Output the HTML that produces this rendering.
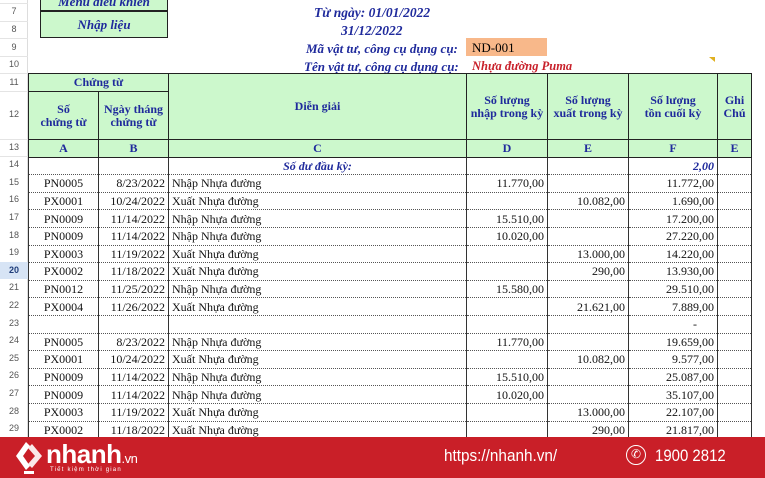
<!DOCTYPE html>
<html><head><meta charset="utf-8"><style>
*{margin:0;padding:0;box-sizing:border-box}
body{width:765px;height:478px;overflow:hidden;background:#fff;position:relative;font-family:"Liberation Serif",serif;}
.rn{position:absolute;left:0;width:28px;text-align:center;font:9px "Liberation Sans",sans-serif;color:#555;}
.abs{position:absolute;white-space:nowrap}
.bi{font-weight:bold;font-style:italic;color:#1f2a9c;font-size:13px}
table{position:absolute;left:28px;top:73px;border-collapse:collapse;table-layout:fixed;font-size:12px}
td{overflow:hidden;white-space:nowrap;padding:0 3px;height:17.6px;line-height:16px}
.h td{background:#ccf8cc;border:1px solid #222;color:#1f2a9c;font-weight:bold;text-align:center;line-height:13px}
.d td{border-left:1px solid #333;border-right:1px solid #333;border-bottom:1px dotted #555;color:#111}
.c{text-align:center}.r{text-align:right}
</style></head><body>
<div class="rn" style="top:6px">7</div>
<div class="rn" style="top:24px">8</div>
<div class="rn" style="top:42px">9</div>
<div class="rn" style="top:59px">10</div>
<div class="rn" style="top:77px">11</div>
<div class="rn" style="top:109px">12</div>
<div class="rn" style="top:142px">13</div>
<div style="position:absolute;left:0;top:0;width:28px;height:437px;border-right:1px solid #ddd"></div>
<div style="position:absolute;left:0;top:3px;width:28px;height:1px;background:#e4e4e4;box-shadow:0 18px #e4e4e4,0 35px #e4e4e4,0 53px #e4e4e4,0 70px #e4e4e4,0 88px #e4e4e4,0 136px #e4e4e4,0 153px #e4e4e4"></div>
<div class="abs" style="left:40px;top:-8px;width:128px;height:19px;background:#ccf8cc;border:1.5px solid #222;text-align:center" ><span class="bi">Menu điều khiển</span></div>
<div class="abs" style="left:40px;top:11px;width:128px;height:27px;background:#ccf8cc;border:1.5px solid #222;text-align:center;line-height:25px"><span class="bi">Nhập liệu</span></div>
<div class="abs bi" style="left:314px;top:5px;font-size:13.5px">Từ ngày: 01/01/2022</div>
<div class="abs bi" style="left:341px;top:23px;font-size:13.5px">31/12/2022</div>
<div class="abs bi" style="left:306px;top:41px">Mã vật tư, công cụ dụng cụ:</div>
<div class="abs" style="left:466px;top:38px;width:81px;height:18px;background:#f8b88a;font-size:13px;padding-left:6px;line-height:19px">ND-001</div>
<div class="abs bi" style="left:304px;top:59px">Tên vật tư, công cụ dụng cụ:</div>
<div class="abs" style="left:472px;top:59px;font-size:12.5px;font-weight:bold;font-style:italic;color:#c8202a">Nhựa đường Puma</div>
<div class="abs" style="left:709px;top:57px;width:0;height:0;border-top:5px solid #e0b020;border-left:6px solid transparent"></div>
<table>
<colgroup><col style="width:70px"><col style="width:70px"><col style="width:298px"><col style="width:81px"><col style="width:81px"><col style="width:89px"><col style="width:34px"></colgroup>
<tr class="h" style="height:18px"><td colspan="2">Chứng từ</td><td rowspan="2">Diễn giải</td><td rowspan="2">Số lượng<br>nhập trong kỳ</td><td rowspan="2">Số lượng<br>xuất trong kỳ</td><td rowspan="2">Số lượng<br>tồn cuối kỳ</td><td rowspan="2">Ghi<br>Chú</td></tr>
<tr class="h" style="height:48px"><td>Số<br>chứng từ</td><td>Ngày tháng<br>chứng từ</td></tr>
<tr class="h" style="height:17px"><td>A</td><td>B</td><td>C</td><td>D</td><td>E</td><td>F</td><td>E</td></tr>
<tr class="d"><td></td><td></td><td class="c" style="font-weight:bold;font-style:italic;color:#1f2a9c">Số dư đầu kỳ:</td><td></td><td></td><td class="r" style="font-weight:bold;font-style:italic;color:#1f2a9c">2,00</td><td></td></tr>
<tr class="d"><td class="c">PN0005</td><td class="r">8/23/2022</td><td>Nhập Nhựa đường</td><td class="r">11.770,00</td><td></td><td class="r">11.772,00</td><td></td></tr>
<tr class="d"><td class="c">PX0001</td><td class="r">10/24/2022</td><td>Xuất Nhựa đường</td><td></td><td class="r">10.082,00</td><td class="r">1.690,00</td><td></td></tr>
<tr class="d"><td class="c">PN0009</td><td class="r">11/14/2022</td><td>Nhập Nhựa đường</td><td class="r">15.510,00</td><td></td><td class="r">17.200,00</td><td></td></tr>
<tr class="d"><td class="c">PN0009</td><td class="r">11/14/2022</td><td>Nhập Nhựa đường</td><td class="r">10.020,00</td><td></td><td class="r">27.220,00</td><td></td></tr>
<tr class="d"><td class="c">PX0003</td><td class="r">11/19/2022</td><td>Xuất Nhựa đường</td><td></td><td class="r">13.000,00</td><td class="r">14.220,00</td><td></td></tr>
<tr class="d"><td class="c">PX0002</td><td class="r">11/18/2022</td><td>Xuất Nhựa đường</td><td></td><td class="r">290,00</td><td class="r">13.930,00</td><td></td></tr>
<tr class="d"><td class="c">PN0012</td><td class="r">11/25/2022</td><td>Nhập Nhựa đường</td><td class="r">15.580,00</td><td></td><td class="r">29.510,00</td><td></td></tr>
<tr class="d"><td class="c">PX0004</td><td class="r">11/26/2022</td><td>Xuất Nhựa đường</td><td></td><td class="r">21.621,00</td><td class="r">7.889,00</td><td></td></tr>
<tr class="d"><td></td><td></td><td></td><td></td><td></td><td class="r" style="padding-right:20px">-</td><td></td></tr>
<tr class="d"><td class="c">PN0005</td><td class="r">8/23/2022</td><td>Nhập Nhựa đường</td><td class="r">11.770,00</td><td></td><td class="r">19.659,00</td><td></td></tr>
<tr class="d"><td class="c">PX0001</td><td class="r">10/24/2022</td><td>Xuất Nhựa đường</td><td></td><td class="r">10.082,00</td><td class="r">9.577,00</td><td></td></tr>
<tr class="d"><td class="c">PN0009</td><td class="r">11/14/2022</td><td>Nhập Nhựa đường</td><td class="r">15.510,00</td><td></td><td class="r">25.087,00</td><td></td></tr>
<tr class="d"><td class="c">PN0009</td><td class="r">11/14/2022</td><td>Nhập Nhựa đường</td><td class="r">10.020,00</td><td></td><td class="r">35.107,00</td><td></td></tr>
<tr class="d"><td class="c">PX0003</td><td class="r">11/19/2022</td><td>Xuất Nhựa đường</td><td></td><td class="r">13.000,00</td><td class="r">22.107,00</td><td></td></tr>
<tr class="d"><td class="c">PX0002</td><td class="r">11/18/2022</td><td>Xuất Nhựa đường</td><td></td><td class="r">290,00</td><td class="r">21.817,00</td><td></td></tr>
</table>
<div class="rn" style="top:159px">14</div><div class="rn" style="top:177px">15</div><div class="rn" style="top:194px">16</div><div class="rn" style="top:212px">17</div><div class="rn" style="top:230px">18</div><div class="rn" style="top:247px">19</div>
<div class="rn" style="top:262px;height:17px;line-height:17px;background:#d7e4f5;color:#1f3d7a;font-weight:bold">20</div>
<div class="rn" style="top:282px">21</div><div class="rn" style="top:300px">22</div><div class="rn" style="top:318px">23</div><div class="rn" style="top:335px">24</div><div class="rn" style="top:353px">25</div><div class="rn" style="top:370px">26</div><div class="rn" style="top:388px">27</div><div class="rn" style="top:406px">28</div><div class="rn" style="top:423px">29</div>
<div style="position:absolute;left:0;top:437px;width:765px;height:41px;background:#c91f28;color:#fff;font-family:'Liberation Sans',sans-serif">
 <svg style="position:absolute;left:12px;top:3px" width="36" height="36" viewBox="0 0 36 36"><path d="M14 2 L4 16 L14 30 L18 26 L11 16 L18 6Z" fill="#fff"/><path d="M20 4 L30 16 L20 28 L16 24 L23 16 L16 8Z" fill="#fff" opacity=".9"/><rect x="12" y="31" width="10" height="3" fill="#fff"/></svg>
 <div style="position:absolute;left:46px;top:2px;font-size:26px;font-weight:bold;letter-spacing:-0.5px">nhanh<span style="font-size:13px;font-weight:normal">.vn</span></div>
 <div style="position:absolute;left:50px;top:30px;font-size:6px;letter-spacing:1.2px">Tiết kiệm thời gian</div>
 <div style="position:absolute;left:444px;top:9px;font-size:17px;transform:scaleX(0.9);transform-origin:left">https://nhanh.vn/</div>
 <div style="position:absolute;left:626px;top:8px;width:20px;height:20px;border:1.5px solid #fff;border-radius:50%;text-align:center;font-size:12px;line-height:17px">✆</div>
 <div style="position:absolute;left:655px;top:9px;font-size:17px;transform:scaleX(0.88);transform-origin:left">1900 2812</div>
</div>
</body></html>
